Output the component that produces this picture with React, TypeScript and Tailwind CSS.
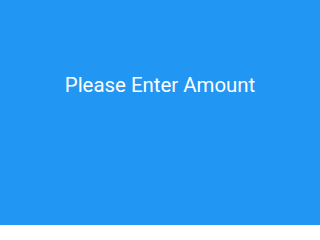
export default function App() {
  return (
    <div className="h-[225px] w-[320px] bg-[#2196f3] flex justify-center pt-[73px] font-['Roboto',sans-serif]">
      <h1 className="text-white text-[20.4px] leading-[24px] font-normal">Please Enter Amount</h1>
    </div>
  );
}
